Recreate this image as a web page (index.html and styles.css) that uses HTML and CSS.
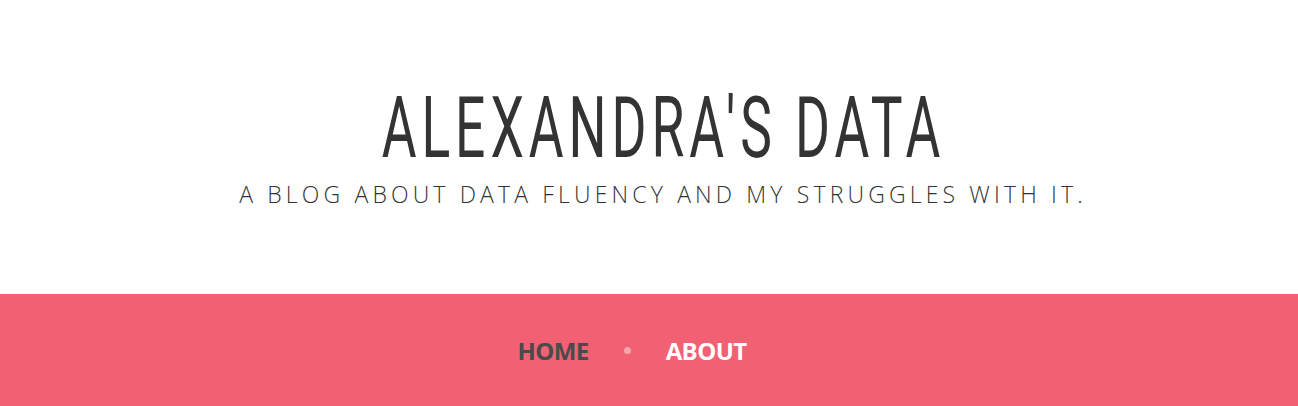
FILE: index.html
```html
<!DOCTYPE html>
<html>
<head>
<meta charset="utf-8">
<link rel="stylesheet" href="styles.css">
</head>
<body>
<header class="masthead">
  <h1 class="site-title">ALEXANDRA'S DATA</h1>
  <p class="site-tagline">A BLOG ABOUT DATA FLUENCY AND MY STRUGGLES WITH IT.</p>
</header>
<nav class="main-nav">
  <a class="nav-link" href="#">HOME</a>
  <span class="nav-dot"></span>
  <a class="nav-link nav-link--active" href="#">ABOUT</a>
</nav>
</body>
</html>
```
FILE: styles.css
```css
html, body { margin: 0; padding: 0; background: #fff; }
body { font-family: "Open Sans", sans-serif; }
.masthead {
  height: 294px;
  display: flex;
  flex-direction: column;
  align-items: center;
  padding-top: 83px;
  padding-left: 28px;
  box-sizing: border-box;
}
.site-title {
  margin: 0;
  font-family: Roboto, sans-serif;
  font-weight: 400;
  font-size: 86px;
  line-height: 90px;
  letter-spacing: 8px;
  color: #333;
  transform: scaleX(0.62);
}
.site-tagline {
  margin: 6px 0 0;
  font-family: "Open Sans", sans-serif;
  font-weight: 300;
  font-size: 23px;
  line-height: 30px;
  letter-spacing: 4.15px;
  color: #333;
}
.main-nav {
  height: 112px;
  background: #f26173;
  display: flex;
  justify-content: center;
  align-items: center;
  gap: 35px;
  padding-right: 34px;
}
.nav-link {
  font-family: "Open Sans", sans-serif;
  font-weight: 700;
  font-size: 24px;
  color: #4a4a4a;
  text-decoration: none;
  letter-spacing: -0.6px;
}
.nav-link--active { color: #fff; }
.nav-dot {
  width: 7px;
  height: 7px;
  border-radius: 50%;
  background: #f9a3ad;
}
```
